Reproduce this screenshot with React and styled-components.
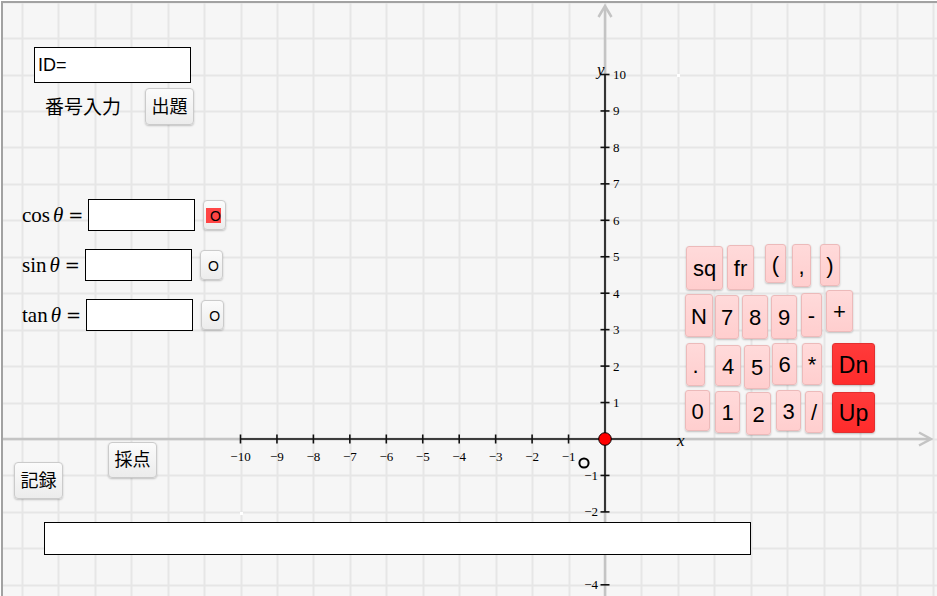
import React from "react";
import styled, { createGlobalStyle, css } from "styled-components";

const U = 36.45;
const OX = 605;
const OY = 439;

const Global = createGlobalStyle`
  html, body { margin: 0; padding: 0; background: #fff; }
  body {
    width: 937px; height: 596px; overflow: hidden;
    font-family: "Liberation Sans", "Noto Sans CJK JP", sans-serif;
  }
`;

const Canvas = styled.main`
  position: relative;
  width: 937px;
  height: 596px;
  background: #f6f6f6;
  overflow: hidden;
`;

const GraphLayer = styled.svg`
  position: absolute;
  inset: 0;
  display: block;
`;

const Frame = styled.div`
  position: absolute;
  inset: 0;
  pointer-events: none;
  box-shadow: inset 1px 1px 0 #fff, inset 3px 3px 0 #a2a2a2;
`;

const GrayButton = styled.button`
  box-sizing: border-box;
  width: 49px;
  height: 37px;
  padding: 0;
  border: 1px solid #cbcbcb;
  border-radius: 4px;
  background: linear-gradient(#fbfbfb, #ececec);
  box-shadow: 0 1px 2px rgba(0, 0, 0, 0.22);
  font-family: "Liberation Sans", "Noto Sans CJK JP", sans-serif;
  font-size: 18px;
  line-height: 1;
  color: #000;
`;

const IdPanel = styled.section`
  position: absolute;
  left: 34px;
  top: 47px;
  display: flex;
  flex-direction: column;
  gap: 5px;
`;

const IdField = styled.div`
  box-sizing: border-box;
  width: 157px;
  height: 36px;
  border: 1px solid #000;
  background: #fff;
  display: flex;
  align-items: center;
  padding-left: 3px;
  font-size: 18px;
  color: #000;
`;

const IdRow = styled.div`
  display: flex;
  align-items: center;
  padding-left: 11px;
`;

const NumberLabel = styled.span`
  font-family: "Noto Sans CJK JP", sans-serif;
  font-size: 19px;
  color: #000;
  margin-right: 24px;
  margin-top: -3px;
`;

const TrigPanel = styled.section`
  position: absolute;
  left: 22px;
  top: 199px;
  display: flex;
  flex-direction: column;
  gap: 18px;
`;

const TrigRow = styled.div`
  display: flex;
  align-items: center;
  height: 32px;
`;

const MathLabel = styled.span`
  display: flex;
  align-items: baseline;
  font-family: "Liberation Serif", "DejaVu Serif", serif;
  font-size: 21px;
  color: #000;
  margin-right: 5px;
  white-space: nowrap;
  i { font-style: italic; margin-left: 3px; margin-right: 5px; }
`;

const Equals = styled.span`
  font-family: "DejaVu Serif", serif;
  font-size: 18px;
  font-weight: 300;
`;

const AnswerInput = styled.div`
  box-sizing: border-box;
  width: 107px;
  height: 32px;
  border: 1px solid #000;
  background: #fff;
`;

const CheckButton = styled(GrayButton)`
  width: 23px;
  height: 30px;
  margin-left: 8px;
  font-size: 14px;
  display: flex;
  align-items: center;
  justify-content: center;
`;

const Mark = styled.span`
  display: inline-block;
  width: 15px;
  height: 15px;
  line-height: 16px;
  text-align: right;
  background: ${(p) => (p.$on ? "#ff4545" : "transparent")};
  margin-left: ${(p) => (p.$on ? "-3px" : "0")};
`;

const Keypad = styled.section`
  position: absolute;
  left: 685px;
  top: 244px;
  display: flex;
  flex-direction: column;
`;

const KeyRow = styled.div`
  display: flex;
  align-items: flex-start;
  height: ${(p) => p.$h}px;
`;

const Key = styled.div`
  box-sizing: border-box;
  width: ${(p) => p.$w}px;
  height: ${(p) => p.$h}px;
  margin-left: ${(p) => p.$ml}px;
  margin-top: ${(p) => p.$mt}px;
  display: flex;
  align-items: center;
  justify-content: center;
  border-radius: 3px;
  font-family: "Liberation Sans", sans-serif;
  font-size: 22px;
  color: #000;
  padding-top: 2px;
  box-shadow: 0 1px 2px rgba(0, 0, 0, 0.22);
  ${(p) =>
    p.$red
      ? css`
          background: linear-gradient(#ff3b3b, #ff2b2b);
          border: 1px solid #e23030;
          font-size: 23px;
        `
      : css`
          background: linear-gradient(#ffdada, #ffcece);
          border: 1px solid #ecbaba;
        `}
`;

const ScoreButton = styled(GrayButton)`
  position: absolute;
  left: 108px;
  top: 442px;
  height: 36px;
`;

const RecordButton = styled(GrayButton)`
  position: absolute;
  left: 14px;
  top: 462px;
`;

const AnswerBox = styled.div`
  position: absolute;
  left: 44px;
  top: 522px;
  box-sizing: border-box;
  width: 707px;
  height: 33px;
  border: 1px solid #000;
  background: #fff;
`;

const keyRows = [
  {
    h: 46,
    keys: [
      ["sq", 37, 44, 1, 2],
      ["fr", 27, 45, 4, 1],
      ["(", 21, 39, 11, 0],
      [",", 19, 43, 6, 0],
      [")", 20, 42, 9, 0],
    ],
  },
  {
    h: 53,
    keys: [
      ["N", 28, 43, 0, 4],
      ["7", 24, 44, 2, 5],
      ["8", 26, 44, 3, 5],
      ["9", 26, 44, 3, 5],
      ["-", 21, 44, 4, 3],
      ["+", 27, 42, 4, 0],
    ],
  },
  {
    h: 47,
    keys: [
      [".", 19, 43, 1, 0],
      ["4", 26, 41, 10, 2],
      ["5", 26, 44, 3, 2],
      ["6", 25, 42, 2, 0],
      ["*", 20, 42, 5, 0],
      ["Dn", 43, 42, 10, 0, true],
    ],
  },
  {
    h: 45,
    keys: [
      ["0", 25, 41, 0, 0],
      ["1", 25, 42, 5, 1],
      ["2", 25, 43, 6, 2],
      ["3", 25, 41, 5, 0],
      ["/", 18, 42, 4, 1],
      ["Up", 43, 41, 9, 2, true],
    ],
  },
];

function Graph() {
  const vx = [];
  for (let k = -17; k <= 9; k++) vx.push(Math.round(OX + k * U) + 0.5);
  const hy = [];
  for (let k = -12; k <= 4; k++) hy.push(Math.round(OY + k * U) + 0.5);
  const xt = [-10, -9, -8, -7, -6, -5, -4, -3, -2, -1];
  const yt = [1, 2, 3, 4, 5, 6, 7, 8, 9, 10, -1, -2, -4];
  const serif = '"Liberation Serif", "DejaVu Serif", serif';
  return (
    <GraphLayer width="937" height="596" viewBox="0 0 937 596">
      <g stroke="#e6e6e6" strokeWidth="2">
        {vx.map((x) => (
          <line key={"v" + x} x1={x} y1="0" x2={x} y2="596" />
        ))}
        {hy.map((y) => (
          <line key={"h" + y} x1="0" y1={y} x2="937" y2={y} />
        ))}
      </g>
      <g stroke="#c4c4c4" strokeWidth="2.5" fill="none">
        <line x1="0" y1={OY} x2="930" y2={OY} />
        <polyline points="919,432.5 931,439 919,445.5" />
        <line x1={OX} y1="596" x2={OX} y2="7" />
        <polyline points="598.5,17 605,6 611.5,17" />
      </g>
      <g stroke="#111" strokeWidth="1.6">
        <line x1="241" y1={OY} x2="680" y2={OY} />
        <line x1={OX} y1="75" x2={OX} y2="512" />
        {xt.map((t) => {
          const x = OX + t * U;
          return <line key={"xt" + t} x1={x} y1={OY - 4.5} x2={x} y2={OY + 4.5} />;
        })}
        {yt.map((t) => {
          const y = OY - t * U;
          return <line key={"yt" + t} x1={OX - 4.5} y1={y} x2={OX + 4.5} y2={y} />;
        })}
      </g>
      <g fontFamily={serif} fontSize="13" fill="#000">
        {xt.map((t) => (
          <text key={"xl" + t} x={OX + t * U} y="461" textAnchor="middle">
            {"\u2212" + -t}
          </text>
        ))}
        {yt.map((t) =>
          t > 0 ? (
            <text key={"yl" + t} x="613" y={OY - t * U + 4.5}>
              {t}
            </text>
          ) : (
            <text key={"yl" + t} x="598" y={OY - t * U + 4.5} textAnchor="end">
              {"\u2212" + -t}
            </text>
          )
        )}
      </g>
      <text x="677" y="446" fontFamily={serif} fontStyle="italic" fontSize="17" fill="#000">
        x
      </text>
      <text x="597" y="75" fontFamily={serif} fontStyle="italic" fontSize="17" fill="#000">
        y
      </text>
      <rect x="677" y="74" width="3" height="3" fill="#fff" />
      <rect x="240" y="512" width="3" height="3" fill="#fff" />
      <circle cx="584" cy="463" r="4.6" fill="none" stroke="#000" strokeWidth="2" />
      <circle cx={OX} cy={OY} r="6.3" fill="#ff0000" stroke="#000" strokeWidth="1" />
    </GraphLayer>
  );
}

const trig = [
  { fn: "cos", on: true },
  { fn: "sin", on: false },
  { fn: "tan", on: false },
];

export default function App() {
  return (
    <>
      <Global />
      <Canvas>
        <Graph />

        <IdPanel>
          <IdField>ID=</IdField>
          <IdRow>
            <NumberLabel>番号入力</NumberLabel>
            <GrayButton>出題</GrayButton>
          </IdRow>
        </IdPanel>

        <TrigPanel>
          {trig.map((r) => (
            <TrigRow key={r.fn}>
              <MathLabel>
                {r.fn}
                <i>θ</i>
                <Equals>=</Equals>
              </MathLabel>
              <AnswerInput />
              <CheckButton>
                <Mark $on={r.on}>O</Mark>
              </CheckButton>
            </TrigRow>
          ))}
        </TrigPanel>

        <Keypad>
          {keyRows.map((row, i) => (
            <KeyRow key={i} $h={row.h}>
              {row.keys.map(([label, w, h, ml, mt, red]) => (
                <Key key={label} $w={w} $h={h} $ml={ml} $mt={mt} $red={red}>
                  {label}
                </Key>
              ))}
            </KeyRow>
          ))}
        </Keypad>

        <ScoreButton>採点</ScoreButton>
        <RecordButton>記録</RecordButton>
        <AnswerBox />

        <Frame />
      </Canvas>
    </>
  );
}
